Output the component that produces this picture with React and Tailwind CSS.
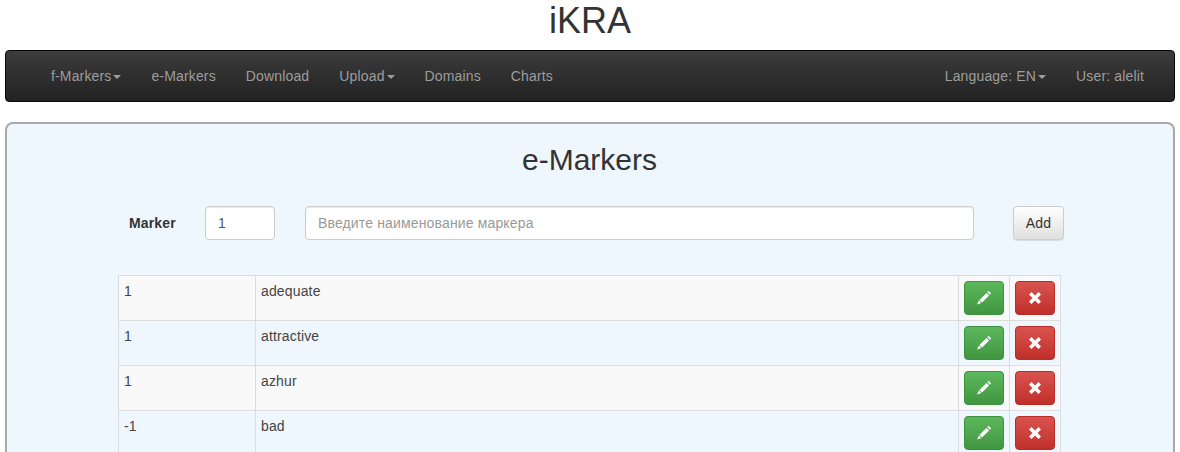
const FONT = "font-['Liberation_Sans',Arial,sans-serif]";

const rows = [
  { score: '1', name: 'adequate' },
  { score: '1', name: 'attractive' },
  { score: '1', name: 'azhur' },
  { score: '-1', name: 'bad' },
];

function Caret() {
  return <span className="ml-[2px] inline-block align-middle w-0 h-0 border-x-[4px] border-x-transparent border-t-[4px] border-t-[#9d9d9d]" />;
}

function NavLink({ children, caret }) {
  return (
    <a className="block px-[15px] py-[15px] leading-5 text-[#9d9d9d] whitespace-nowrap">
      {children}
      {caret && <Caret />}
    </a>
  );
}

function PencilIcon() {
  return (
    <svg width="16" height="16" viewBox="0 0 16 16" fill="white">
      <path d="M12.6 0.8 15.2 3.4 13.9 4.7 11.3 2.1Z" />
      <path d="M10.5 2.9 13.1 5.5 6 12.6 3.4 10Z" />
      <path d="M2.9 10.6 5.4 13.1 1 14.4Z" />
    </svg>
  );
}

function CrossIcon() {
  return (
    <svg width="14" height="14" viewBox="0 0 14 14" fill="white">
      <path d="M3.5 1 7 4.5 10.5 1 13 3.5 9.5 7 13 10.5 10.5 13 7 9.5 3.5 13 1 10.5 4.5 7 1 3.5Z" />
    </svg>
  );
}

export default function App() {
  return (
    <div className={`${FONT} h-screen overflow-hidden bg-white text-sm tracking-[0.15px] text-[#333]`}>
      <h1 className="mt-0 h-[50px] pt-[1px] text-center text-[36px] leading-10 font-normal tracking-normal">iKRA</h1>

      <nav className="mx-[5px] h-[52px] flex justify-between pl-[30px] pr-[15px] rounded border border-[#080808] bg-gradient-to-b from-[#3c3c3c] to-[#222]">
        <div className="flex">
          <NavLink caret>f-Markers</NavLink>
          <NavLink>e-Markers</NavLink>
          <NavLink>Download</NavLink>
          <NavLink caret>Upload</NavLink>
          <NavLink>Domains</NavLink>
          <NavLink>Charts</NavLink>
        </div>
        <div className="flex">
          <NavLink caret>Language: EN</NavLink>
          <NavLink>User: alelit</NavLink>
        </div>
      </nav>

      <main className="mx-[5px] mt-5 rounded-lg border-2 border-[#a9a9a9] border-b-0 bg-[#eef6fe] h-[400px] pt-[19px]">
        <h2 className="pr-[1px] text-center text-[30px] leading-[33px] font-normal tracking-normal">e-Markers</h2>

        <form className="mt-[30px] flex items-center h-[34px] pl-[122px]">
          <label className="w-[76px] font-bold">Marker</label>
          <input
            defaultValue="1"
            className="w-[70px] h-[34px] px-3 rounded border border-[#ccc] bg-white text-[#555] shadow-[inset_0_1px_1px_rgba(0,0,0,0.075)] outline-none"
          />
          <input
            placeholder="Введите наименование маркера"
            className="ml-[30px] w-[669px] h-[34px] px-3 rounded border border-[#ccc] bg-white text-[#555] placeholder:text-[#999] shadow-[inset_0_1px_1px_rgba(0,0,0,0.075)] outline-none"
          />
          <button
            type="button"
            className="ml-[39px] w-[51px] h-[34px] rounded border border-[#ccc] bg-gradient-to-b from-white to-[#e0e0e0] text-[#333] shadow-[0_1px_1px_rgba(0,0,0,0.1)]"
          >
            Add
          </button>
        </form>

        <table className="mt-[35px] ml-[111px] w-[943px] table-fixed border-collapse text-[#444]">
          <colgroup>
            <col className="w-[137px]" />
            <col />
            <col className="w-[51px]" />
            <col className="w-[51px]" />
          </colgroup>
          <tbody>
            {rows.map((row, i) => (
              <tr key={i} className={i % 2 === 0 ? 'bg-[#f9f9f9]' : ''}>
                <td className="h-[45px] border border-[#ddd] p-[5px] align-top leading-5">{row.score}</td>
                <td className="h-[45px] border border-[#ddd] p-[5px] align-top leading-5">{row.name}</td>
                <td className="h-[45px] border border-[#ddd] p-[5px] align-top">
                  <button type="button" className="flex items-center justify-center w-10 h-[34px] rounded border border-[#3e8f3e] bg-gradient-to-b from-[#5cb85c] to-[#419641]">
                    <PencilIcon />
                  </button>
                </td>
                <td className="h-[45px] border border-[#ddd] p-[5px] align-top">
                  <button type="button" className="flex items-center justify-center w-10 h-[34px] rounded border border-[#b92c28] bg-gradient-to-b from-[#d9534f] to-[#c12e2a]">
                    <CrossIcon />
                  </button>
                </td>
              </tr>
            ))}
          </tbody>
        </table>
      </main>
    </div>
  );
}
